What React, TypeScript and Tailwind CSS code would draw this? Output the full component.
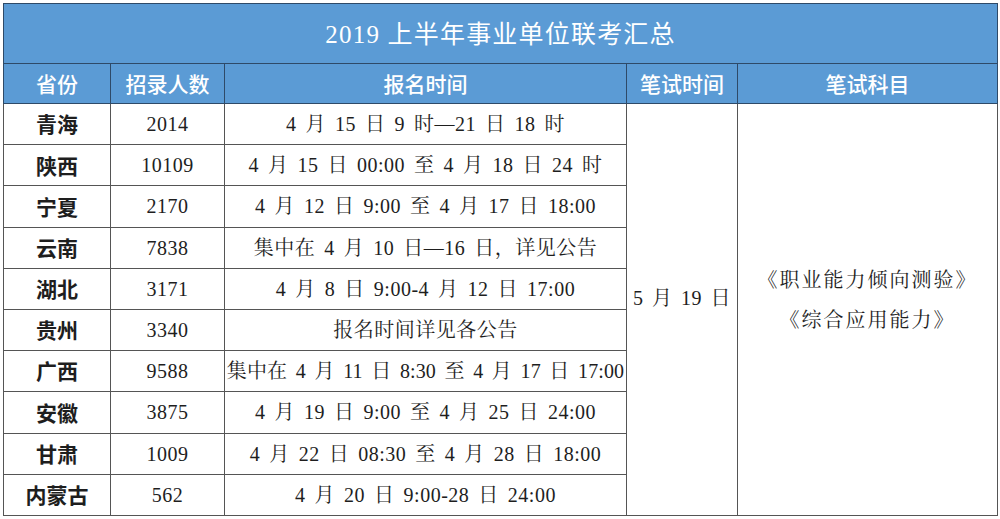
const rows = [
  { p: '青海', n: '2014', t: '4 月 15 日 9 时—21 日 18 时' },
  { p: '陕西', n: '10109', t: '4 月 15 日 00:00 至 4 月 18 日 24 时' },
  { p: '宁夏', n: '2170', t: '4 月 12 日 9:00 至 4 月 17 日 18:00' },
  { p: '云南', n: '7838', t: '集中在 4 月 10 日—16 日，详见公告' },
  { p: '湖北', n: '3171', t: '4 月 8 日 9:00-4 月 12 日 17:00' },
  { p: '贵州', n: '3340', t: '报名时间详见各公告' },
  { p: '广西', n: '9588', t: '集中在 4 月 11 日 8:30 至 4 月 17 日 17:00' },
  { p: '安徽', n: '3875', t: '4 月 19 日 9:00 至 4 月 25 日 24:00' },
  { p: '甘肃', n: '1009', t: '4 月 22 日 08:30 至 4 月 28 日 18:00' },
  { p: '内蒙古', n: '562', t: '4 月 20 日 9:00-28 日 24:00' },
];

const sans = "font-['Noto_Sans_CJK_SC','Noto_Sans',sans-serif]";
const serif = "font-['Liberation_Serif','Noto_Serif_CJK_SC','Noto_Sans_CJK_SC',serif]";

export default function App() {
  return (
    <div className="w-[1000px] h-[519px] bg-white pl-[3px] pt-[3px] overflow-hidden">
      <table className="table-fixed border-collapse w-[994px]">
        <colgroup>
          <col className="w-[107px]" />
          <col className="w-[114px]" />
          <col className="w-[402px]" />
          <col className="w-[111px]" />
          <col className="w-[260px]" />
        </colgroup>
        <thead>
          <tr className="h-[60px] bg-[#5b9bd5]">
            <th
              colSpan={5}
              className={`border border-[#2e4a68] text-white text-[25px] font-normal tracking-[1.2px] ${serif}`}
            >
              2019 <span className={sans}>上半年事业单位联考汇总</span>
            </th>
          </tr>
          <tr className={`h-[40px] bg-[#5b9bd5] text-white text-[21px] font-medium ${sans}`}>
            <th className="border border-[#2e4a68] font-medium">省份</th>
            <th className="border border-[#2e4a68] font-medium">招录人数</th>
            <th className="border border-[#2e4a68] font-medium">报名时间</th>
            <th className="border border-[#2e4a68] font-medium">笔试时间</th>
            <th className="border border-[#2e4a68] font-medium">笔试科目</th>
          </tr>
        </thead>
        <tbody className="text-[#1e1e1e]">
          {rows.map((r, i) => (
            <tr key={r.p} className="h-[41.2px]">
              <td className={`border border-[#555] text-center text-[21px] font-bold ${sans}`}>{r.p}</td>
              <td className={`border border-[#555] text-center text-[20px] tracking-[0.5px] ${serif}`}>{r.n}</td>
              <td
                className={`border border-[#555] text-center text-[20px] whitespace-nowrap [word-spacing:3.5px] ${serif} ${
                  i === 6 ? 'tracking-[0.1px]' : 'tracking-[0.5px]'
                }`}
              >
                {r.t}
              </td>
              {i === 0 && (
                <>
                  <td
                    rowSpan={10}
                    className={`border border-[#555] text-center text-[20px] pb-[22px] [word-spacing:3px] tracking-[0.5px] ${serif}`}
                  >
                    5 月 19 日
                  </td>
                  <td
                    rowSpan={10}
                    className={`border border-[#555] text-center text-[20px] leading-[40px] pb-[18px] tracking-[2px] ${serif}`}
                  >
                    <div>《职业能力倾向测验》</div>
                    <div>《综合应用能力》</div>
                  </td>
                </>
              )}
            </tr>
          ))}
        </tbody>
      </table>
    </div>
  );
}
